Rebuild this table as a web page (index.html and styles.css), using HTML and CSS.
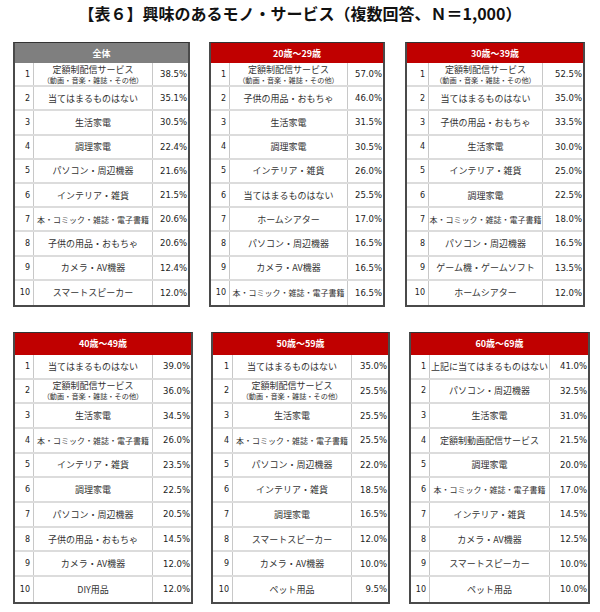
FILE: index.html
```html
<!DOCTYPE html>
<html lang="ja">
<head>
<meta charset="utf-8">
<title>興味のあるモノ・サービス</title>
<link rel="stylesheet" href="styles.css">
</head>
<body>
<h1 class="title">【表６】興味のあるモノ・サービス（複数回答、Ｎ＝1,000）</h1>

<div class="band band-top">
  <section class="tbl t1 gray">
    <div class="head">全体</div>
    <div class="row"><span class="no">1</span><span class="item">定額制配信サービス<small>（動画・音楽・雑誌・その他）</small></span><span class="pct">38.5%</span></div>
    <div class="row"><span class="no">2</span><span class="item">当てはまるものはない</span><span class="pct">35.1%</span></div>
    <div class="row"><span class="no">3</span><span class="item">生活家電</span><span class="pct">30.5%</span></div>
    <div class="row"><span class="no">4</span><span class="item">調理家電</span><span class="pct">22.4%</span></div>
    <div class="row"><span class="no">5</span><span class="item">パソコン・周辺機器</span><span class="pct">21.6%</span></div>
    <div class="row"><span class="no">6</span><span class="item">インテリア・雑貨</span><span class="pct">21.5%</span></div>
    <div class="row"><span class="no">7</span><span class="item long">本・コミック・雑誌・電子書籍</span><span class="pct">20.6%</span></div>
    <div class="row"><span class="no">8</span><span class="item">子供の用品・おもちゃ</span><span class="pct">20.6%</span></div>
    <div class="row"><span class="no">9</span><span class="item">カメラ・AV機器</span><span class="pct">12.4%</span></div>
    <div class="row"><span class="no">10</span><span class="item">スマートスピーカー</span><span class="pct">12.0%</span></div>
  </section>

  <section class="tbl t2 red">
    <div class="head">20歳～29歳</div>
    <div class="row"><span class="no">1</span><span class="item">定額制配信サービス<small>（動画・音楽・雑誌・その他）</small></span><span class="pct">57.0%</span></div>
    <div class="row"><span class="no">2</span><span class="item">子供の用品・おもちゃ</span><span class="pct">46.0%</span></div>
    <div class="row"><span class="no">3</span><span class="item">生活家電</span><span class="pct">31.5%</span></div>
    <div class="row"><span class="no">4</span><span class="item">調理家電</span><span class="pct">30.5%</span></div>
    <div class="row"><span class="no">5</span><span class="item">インテリア・雑貨</span><span class="pct">26.0%</span></div>
    <div class="row"><span class="no">6</span><span class="item">当てはまるものはない</span><span class="pct">25.5%</span></div>
    <div class="row"><span class="no">7</span><span class="item">ホームシアター</span><span class="pct">17.0%</span></div>
    <div class="row"><span class="no">8</span><span class="item">パソコン・周辺機器</span><span class="pct">16.5%</span></div>
    <div class="row"><span class="no">9</span><span class="item">カメラ・AV機器</span><span class="pct">16.5%</span></div>
    <div class="row"><span class="no">10</span><span class="item long">本・コミック・雑誌・電子書籍</span><span class="pct">16.5%</span></div>
  </section>

  <section class="tbl t3 red">
    <div class="head">30歳～39歳</div>
    <div class="row"><span class="no">1</span><span class="item">定額制配信サービス<small>（動画・音楽・雑誌・その他）</small></span><span class="pct">52.5%</span></div>
    <div class="row"><span class="no">2</span><span class="item">当てはまるものはない</span><span class="pct">35.0%</span></div>
    <div class="row"><span class="no">3</span><span class="item">子供の用品・おもちゃ</span><span class="pct">33.5%</span></div>
    <div class="row"><span class="no">4</span><span class="item">生活家電</span><span class="pct">30.0%</span></div>
    <div class="row"><span class="no">5</span><span class="item">インテリア・雑貨</span><span class="pct">25.0%</span></div>
    <div class="row"><span class="no">6</span><span class="item">調理家電</span><span class="pct">22.5%</span></div>
    <div class="row"><span class="no">7</span><span class="item long">本・コミック・雑誌・電子書籍</span><span class="pct">18.0%</span></div>
    <div class="row"><span class="no">8</span><span class="item">パソコン・周辺機器</span><span class="pct">16.5%</span></div>
    <div class="row"><span class="no">9</span><span class="item">ゲーム機・ゲームソフト</span><span class="pct">13.5%</span></div>
    <div class="row"><span class="no">10</span><span class="item">ホームシアター</span><span class="pct">12.0%</span></div>
  </section>
</div>

<div class="band band-bottom">
  <section class="tbl t4 red">
    <div class="head">40歳～49歳</div>
    <div class="row"><span class="no">1</span><span class="item">当てはまるものはない</span><span class="pct">39.0%</span></div>
    <div class="row"><span class="no">2</span><span class="item">定額制配信サービス<small>（動画・音楽・雑誌・その他）</small></span><span class="pct">36.0%</span></div>
    <div class="row"><span class="no">3</span><span class="item">生活家電</span><span class="pct">34.5%</span></div>
    <div class="row"><span class="no">4</span><span class="item long">本・コミック・雑誌・電子書籍</span><span class="pct">26.0%</span></div>
    <div class="row"><span class="no">5</span><span class="item">インテリア・雑貨</span><span class="pct">23.5%</span></div>
    <div class="row"><span class="no">6</span><span class="item">調理家電</span><span class="pct">22.5%</span></div>
    <div class="row"><span class="no">7</span><span class="item">パソコン・周辺機器</span><span class="pct">20.5%</span></div>
    <div class="row"><span class="no">8</span><span class="item">子供の用品・おもちゃ</span><span class="pct">14.5%</span></div>
    <div class="row"><span class="no">9</span><span class="item">カメラ・AV機器</span><span class="pct">12.0%</span></div>
    <div class="row"><span class="no">10</span><span class="item">DIY用品</span><span class="pct">12.0%</span></div>
  </section>

  <section class="tbl t5 red">
    <div class="head">50歳～59歳</div>
    <div class="row"><span class="no">1</span><span class="item">当てはまるものはない</span><span class="pct">35.0%</span></div>
    <div class="row"><span class="no">2</span><span class="item">定額制配信サービス<small>（動画・音楽・雑誌・その他）</small></span><span class="pct">25.5%</span></div>
    <div class="row"><span class="no">3</span><span class="item">生活家電</span><span class="pct">25.5%</span></div>
    <div class="row"><span class="no">4</span><span class="item long">本・コミック・雑誌・電子書籍</span><span class="pct">25.5%</span></div>
    <div class="row"><span class="no">5</span><span class="item">パソコン・周辺機器</span><span class="pct">22.0%</span></div>
    <div class="row"><span class="no">6</span><span class="item">インテリア・雑貨</span><span class="pct">18.5%</span></div>
    <div class="row"><span class="no">7</span><span class="item">調理家電</span><span class="pct">16.5%</span></div>
    <div class="row"><span class="no">8</span><span class="item">スマートスピーカー</span><span class="pct">12.0%</span></div>
    <div class="row"><span class="no">9</span><span class="item">カメラ・AV機器</span><span class="pct">10.0%</span></div>
    <div class="row"><span class="no">10</span><span class="item">ペット用品</span><span class="pct">9.5%</span></div>
  </section>

  <section class="tbl t6 red">
    <div class="head">60歳～69歳</div>
    <div class="row"><span class="no">1</span><span class="item">上記に当てはまるものはない</span><span class="pct">41.0%</span></div>
    <div class="row"><span class="no">2</span><span class="item">パソコン・周辺機器</span><span class="pct">32.5%</span></div>
    <div class="row"><span class="no">3</span><span class="item">生活家電</span><span class="pct">31.0%</span></div>
    <div class="row"><span class="no">4</span><span class="item">定額制動画配信サービス</span><span class="pct">21.5%</span></div>
    <div class="row"><span class="no">5</span><span class="item">調理家電</span><span class="pct">20.0%</span></div>
    <div class="row"><span class="no">6</span><span class="item long">本・コミック・雑誌・電子書籍</span><span class="pct">17.0%</span></div>
    <div class="row"><span class="no">7</span><span class="item">インテリア・雑貨</span><span class="pct">14.5%</span></div>
    <div class="row"><span class="no">8</span><span class="item">カメラ・AV機器</span><span class="pct">12.5%</span></div>
    <div class="row"><span class="no">9</span><span class="item">スマートスピーカー</span><span class="pct">10.0%</span></div>
    <div class="row"><span class="no">10</span><span class="item">ペット用品</span><span class="pct">10.0%</span></div>
  </section>
</div>
</body>
</html>
```

FILE: styles.css
```css
html, body {
  margin: 0;
  padding: 0;
  background: #ffffff;
}

body {
  width: 600px;
  height: 612px;
  overflow: hidden;
  font-family: "Noto Sans CJK JP", "Noto Sans", sans-serif;
  color: #222;
}

.title {
  margin: 0;
  height: 42px;
  padding-top: 0;
  line-height: 27px;
  font-size: 16px;
  font-weight: bold;
  text-align: center;
  color: #111;
  box-sizing: border-box;
}

.band {
  display: flex;
  align-items: flex-start;
  padding-left: 13px;
}

.band-bottom {
  margin-top: 25px;
}

.tbl {
  --no: 19px;
  --pct: 35px;
  --rowh: 24.2px;
  --headh: 20px;
  box-sizing: border-box;
  border-top: 1px solid #333;
  border-left: 2px solid #4a4a4a;
  border-right: 2px solid #4a4a4a;
  border-bottom: 2px solid #4a4a4a;
  background: #fff;
}

.t1 { width: 177px; }
.t2 { width: 176px; margin-left: 19px; }
.t3 { width: 180px; margin-left: 20px; --no: 22px; --pct: 40px; }
.t4 { width: 180px; --pct: 38px; }
.t5 { width: 179px; margin-left: 18px; --no: 20px; --pct: 36px; }
.t6 { width: 181px; margin-left: 19px; --pct: 38px; }

.band-bottom .tbl {
  --rowh: 24.7px;
  --headh: 22px;
}

.head {
  height: var(--headh);
  display: flex;
  align-items: center;
  justify-content: center;
  color: #fff;
  font-size: 9px;
  font-weight: bold;
}

.gray .head { background: #7f7f7f; }
.red .head { background: #c00000; }

.row {
  display: grid;
  grid-template-columns: var(--no) 1fr var(--pct);
  height: var(--rowh);
  box-sizing: border-box;
  border-bottom: 2px solid #dcdcdc;
}

.row:last-child {
  border-bottom: 0;
}

.no, .item, .pct {
  display: flex;
  align-items: center;
}

.no {
  justify-content: flex-end;
  padding-right: 3px;
  border-right: 1px solid #c8c8c8;
  font-family: "DejaVu Sans", sans-serif;
  font-size: 8px;
  color: #222;
}

.item {
  flex-direction: column;
  justify-content: center;
  text-align: center;
  font-size: 9px;
  line-height: 11px;
  white-space: nowrap;
  border-right: 1px solid #c8c8c8;
  color: #333;
}

.item.long {
  font-size: 8px;
}

.item small {
  display: block;
  font-size: 7.2px;
  line-height: 10px;
}

.pct {
  justify-content: flex-end;
  padding-right: 1px;
  font-family: "DejaVu Sans", sans-serif;
  font-size: 8.5px;
  color: #222;
}
```
